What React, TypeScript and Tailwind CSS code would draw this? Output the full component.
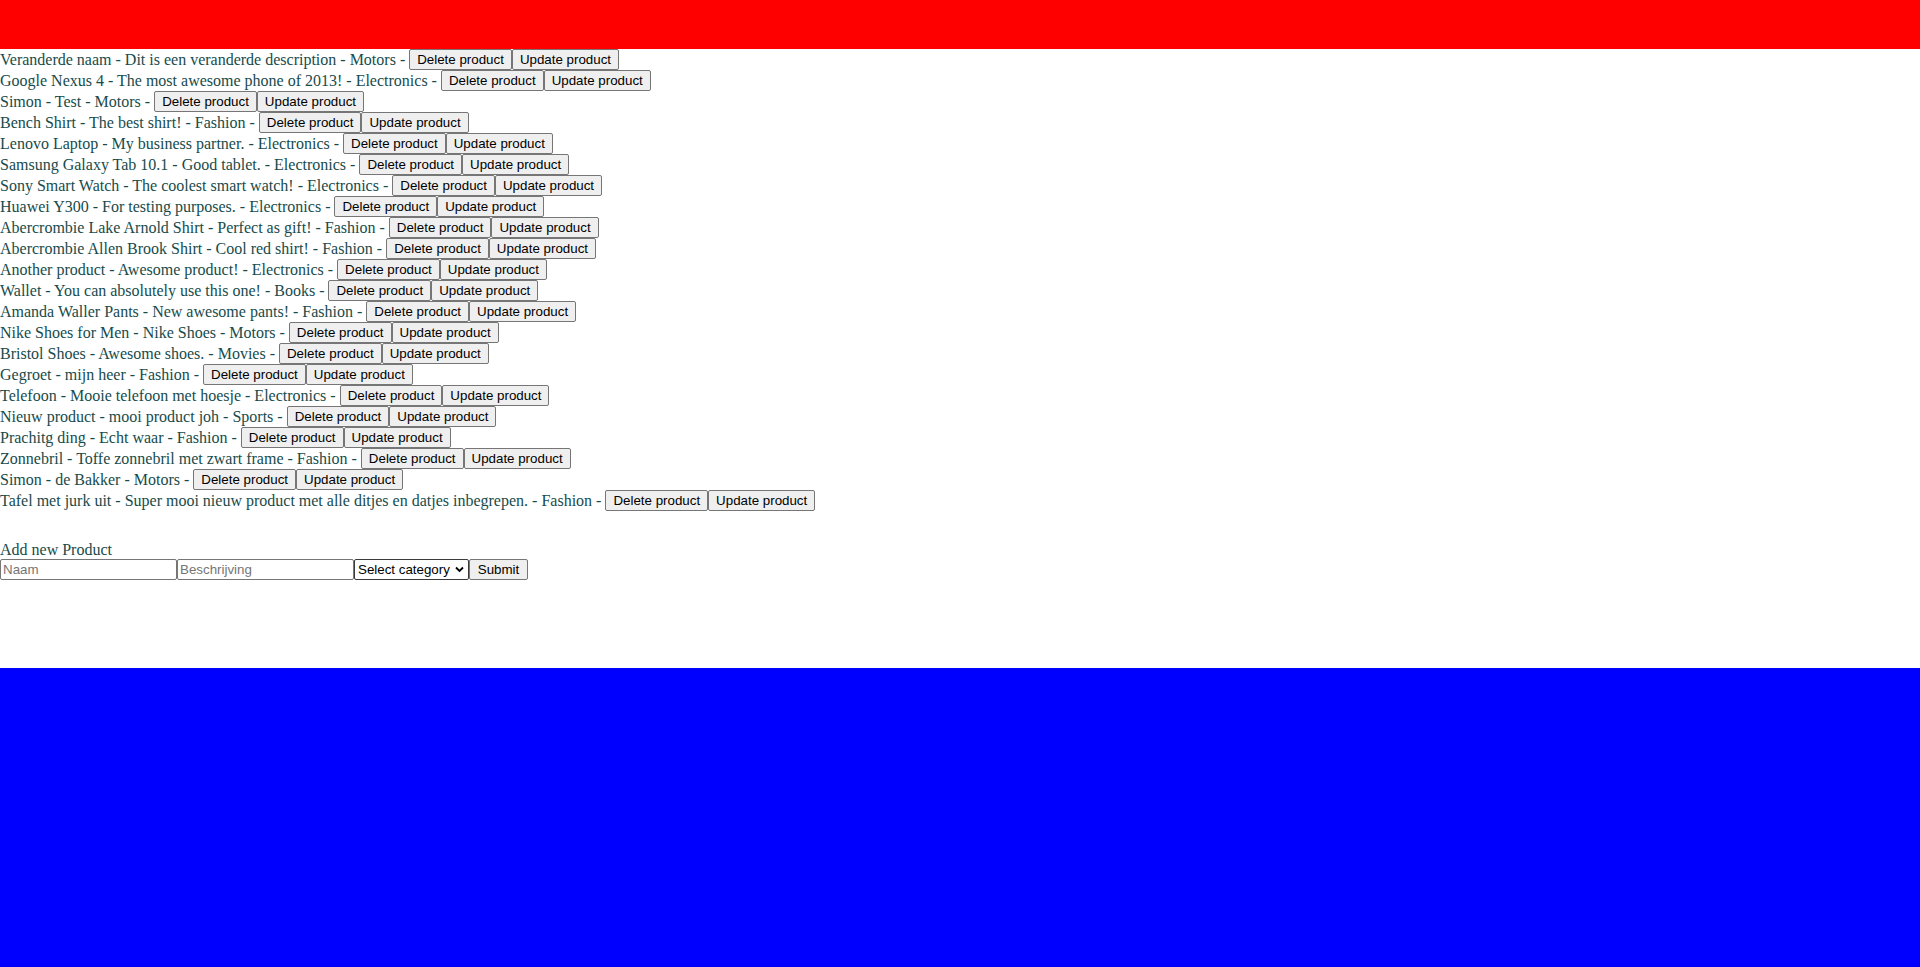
import React from "react";

const products: [string, string, string][] = [
  ["Veranderde naam", "Dit is een veranderde description", "Motors"],
  ["Google Nexus 4", "The most awesome phone of 2013!", "Electronics"],
  ["Simon", "Test", "Motors"],
  ["Bench Shirt", "The best shirt!", "Fashion"],
  ["Lenovo Laptop", "My business partner.", "Electronics"],
  ["Samsung Galaxy Tab 10.1", "Good tablet.", "Electronics"],
  ["Sony Smart Watch", "The coolest smart watch!", "Electronics"],
  ["Huawei Y300", "For testing purposes.", "Electronics"],
  ["Abercrombie Lake Arnold Shirt", "Perfect as gift!", "Fashion"],
  ["Abercrombie Allen Brook Shirt", "Cool red shirt!", "Fashion"],
  ["Another product", "Awesome product!", "Electronics"],
  ["Wallet", "You can absolutely use this one!", "Books"],
  ["Amanda Waller Pants", "New awesome pants!", "Fashion"],
  ["Nike Shoes for Men", "Nike Shoes", "Motors"],
  ["Bristol Shoes", "Awesome shoes.", "Movies"],
  ["Gegroet", "mijn heer", "Fashion"],
  ["Telefoon", "Mooie telefoon met hoesje", "Electronics"],
  ["Nieuw product", "mooi product joh", "Sports"],
  ["Prachitg ding", "Echt waar", "Fashion"],
  ["Zonnebril", "Toffe zonnebril met zwart frame", "Fashion"],
  ["Simon", "de Bakker", "Motors"],
  ["Tafel met jurk uit", "Super mooi nieuw product met alle ditjes en datjes inbegrepen.", "Fashion"],
];

const btn =
  "inline-block align-top h-[21px] px-[7px] bg-[#efefef] border border-[#767676] rounded-[2px] text-black text-[13.333px] leading-[19px] font-['Liberation_Sans',Arial,sans-serif]";

export default function App() {
  return (
    <div className="w-[1920px] min-h-[967px] bg-white font-['Liberation_Serif','Times_New_Roman',serif] text-[16px] text-[#174b4b]">
      <div className="h-[49px] bg-[#ff0000]" />
      <div className="h-[619px]">
        <div>
          {products.map(([n, d, c], i) => (
            <div key={i} className="h-[21px] leading-[21px] whitespace-nowrap">
              {n} - {d} - {c} -{" "}
              <button className={btn}>Delete product</button>
              <button className={btn}>Update product</button>
            </div>
          ))}
        </div>
        <div className="h-[29px]" />
        <div className="h-[19px] leading-[19px]">Add new Product</div>
        <form className="flex h-[21px] items-start">
          <input
            placeholder="Naam"
            className="block w-[177px] h-[21px] px-[2px] border border-[#767676] rounded-[2px] text-black text-[13.333px] placeholder:text-[#757575] font-['Liberation_Sans',Arial,sans-serif]"
          />
          <input
            placeholder="Beschrijving"
            className="block w-[177px] h-[21px] px-[2px] border border-[#767676] rounded-[2px] text-black text-[13.333px] placeholder:text-[#757575] font-['Liberation_Sans',Arial,sans-serif]"
          />
          <div className="relative w-[115px] h-[21px]">
            <select
              defaultValue=""
              className="block appearance-none w-[115px] h-[21px] pl-[3px] pr-[18px] py-0 border border-[#3b3b3b] rounded-[2px] bg-white text-black text-[13.333px] leading-[19px] font-['Liberation_Sans',Arial,sans-serif]"
            >
              <option value="">Select category</option>
            </select>
            <svg
              className="absolute right-[5px] top-[7px] pointer-events-none"
              width="9"
              height="7"
              viewBox="0 0 9 7"
            >
              <path d="M1 1.5 L4.5 5 L8 1.5" stroke="#000" strokeWidth="1.8" fill="none" />
            </svg>
          </div>
          <button type="button" className={btn + " w-[59px]"}>
            Submit
          </button>
        </form>
      </div>
      <div className="h-[299px] bg-[#0000ff]" />
    </div>
  );
}
